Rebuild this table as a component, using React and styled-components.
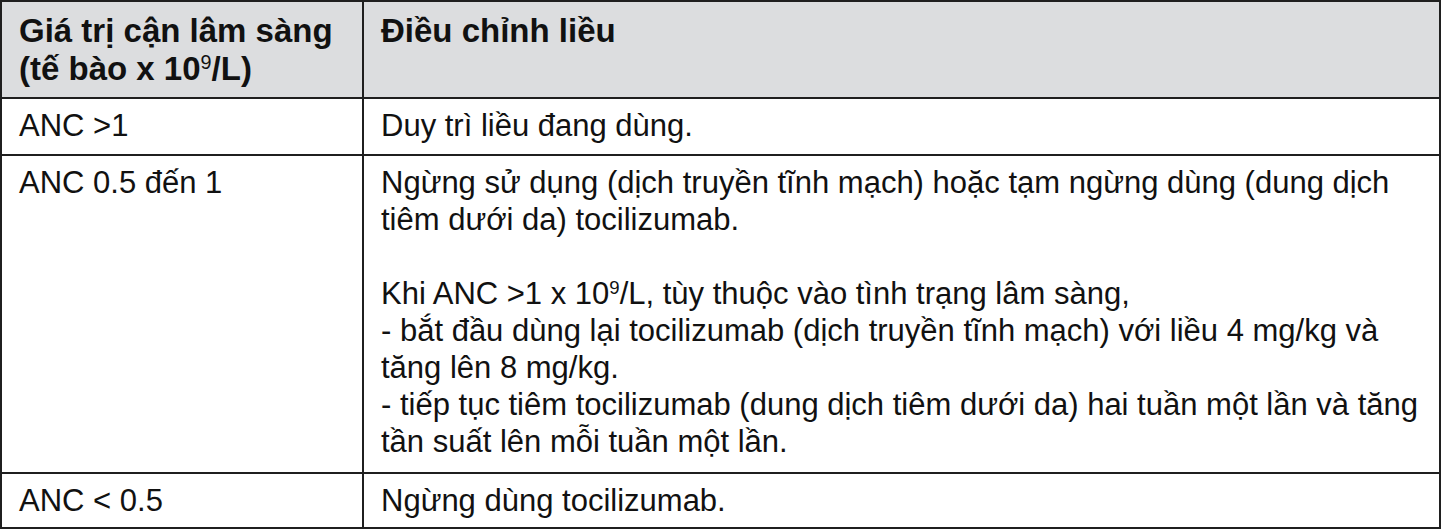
import React from 'react';
import styled, { createGlobalStyle } from 'styled-components';

const GlobalStyle = createGlobalStyle`
  html, body {
    margin: 0;
    padding: 0;
    background: #ffffff;
  }
  body {
    font-family: "Liberation Sans", Arial, sans-serif;
    color: #111111;
  }
`;

// Whole table: grid of two columns, outer top/left border here
const Table = styled.div`
  width: 1441px;
  display: grid;
  grid-template-columns: 362px 1fr;
  border-top: 2px solid #1f1f1f;
  border-left: 2px solid #1f1f1f;
  box-sizing: border-box;
`;

// One cell; each draws its own right and bottom rule
const Cell = styled.div`
  box-sizing: border-box;
  border-right: 2px solid #1f1f1f;
  border-bottom: 2px solid #1f1f1f;
  padding: ${(props) => (props.head ? '10px 17px 9px' : `8px 17px ${props.pb || 10}px`)};
  background: ${(props) => (props.head ? '#dcdddf' : '#ffffff')};
  font-size: ${(props) => (props.head ? '33px' : '31px')};
  font-weight: ${(props) => (props.head ? 700 : 400)};
  line-height: ${(props) => (props.head ? '38px' : '37px')};
  color: #111111;
`;

// Exponent like the 9 in 10^9/L
const Sup = styled.span`
  font-size: 0.6em;
  font-weight: 400;
  line-height: 0;
  position: relative;
  top: -0.55em;
`;

// Paragraph block inside a cell, with a blank line above when needed
const Para = styled.div`
  margin-top: ${(props) => (props.gap ? '37px' : '0')};
`;

const App = () => {
  return (
    <>
      <GlobalStyle />
      <Table>
        <Cell head>
          Giá trị cận lâm sàng
          <br />
          (tế bào x 10<Sup>9</Sup>/L)
        </Cell>
        <Cell head>Điều chỉnh liều</Cell>

        <Cell>ANC &gt;1</Cell>
        <Cell>Duy trì liều đang dùng.</Cell>

        <Cell pb={12}>ANC 0.5 đến 1</Cell>
        <Cell pb={12}>
          <Para>
            Ngừng sử dụng (dịch truyền tĩnh mạch) hoặc tạm ngừng dùng (dung dịch
            <br />
            tiêm dưới da) tocilizumab.
          </Para>
          <Para gap>
            Khi ANC &gt;1 x 10<Sup>9</Sup>/L, tùy thuộc vào tình trạng lâm sàng,
            <br />
            - bắt đầu dùng lại tocilizumab (dịch truyền tĩnh mạch) với liều 4 mg/kg và
            <br />
            tăng lên 8 mg/kg.
            <br />
            - tiếp tục tiêm tocilizumab (dung dịch tiêm dưới da) hai tuần một lần và tăng
            <br />
            tần suất lên mỗi tuần một lần.
          </Para>
        </Cell>

        <Cell pb={8}>ANC &lt; 0.5</Cell>
        <Cell pb={8}>Ngừng dùng tocilizumab.</Cell>
      </Table>
    </>
  );
};

export default App;
